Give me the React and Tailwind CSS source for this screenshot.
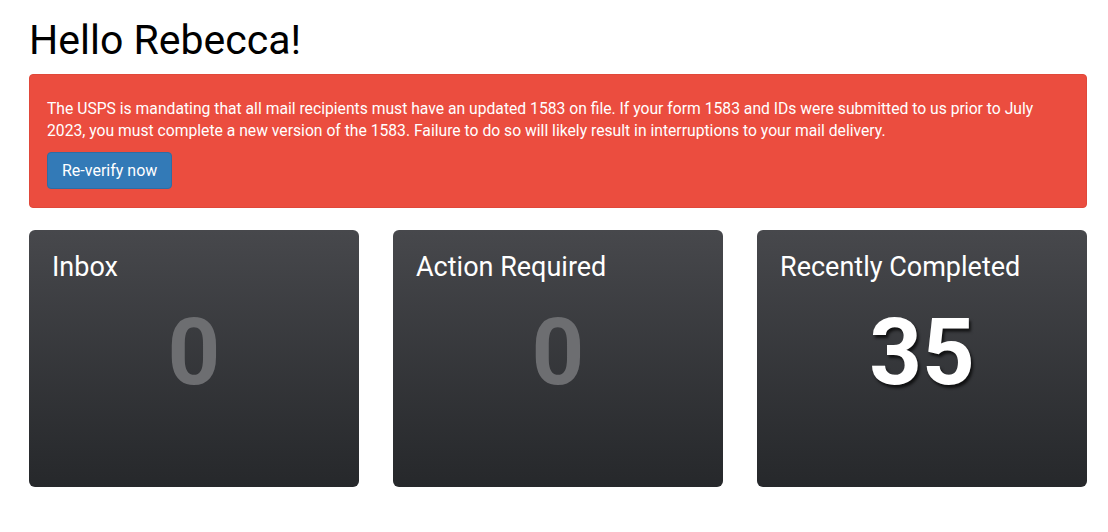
export default function App() {
  const cards = [
    { title: 'Inbox', count: 0 },
    { title: 'Action Required', count: 0 },
    { title: 'Recently Completed', count: 35 },
  ]

  return (
    <div className="min-h-screen bg-white pl-[29px] pr-[21px] pt-[18px] text-black" style={{ fontFamily: 'Roboto, sans-serif' }}>
      <h1 className="text-[41px] leading-[44px] font-normal">Hello Rebecca!</h1>

      {/* Alert */}
      <div className="mt-[12px] rounded-[4px] border border-[#e0483a] bg-[#eb4d3f] px-[17px] pt-[23px] pb-[18px] text-white">
        <p className="text-[15.7px] leading-[22px]">
          The USPS is mandating that all mail recipients must have an updated 1583 on file. If your form 1583 and IDs were submitted to us prior to July 2023, you must complete a new version of the 1583. Failure to do so will likely result in interruptions to your mail delivery.
        </p>
        <button className="mt-[10px] h-[37px] rounded-[4px] border border-[#2e6da4] bg-[#337ab7] px-[14px] text-[16px] text-white">
          Re-verify now
        </button>
      </div>

      {/* Cards */}
      <div className="mt-[22px] grid grid-cols-3 gap-[34px]">
        {cards.map((c) => (
          <div
            key={c.title}
            className="h-[257px] rounded-[6px] bg-gradient-to-b from-[#47484c] to-[#26282b] px-[23px] pt-[21px]"
          >
            <h2 className="text-[27px] leading-[32px] text-white">{c.title}</h2>
            <div
              className={
                c.count > 0
                  ? 'mt-[15px] text-center text-[92px] leading-[110px] font-bold text-white [text-shadow:2px_3px_3px_rgba(0,0,0,0.7)]'
                  : 'mt-[15px] text-center text-[92px] leading-[110px] font-bold text-[#6d6e71]'
              }
            >
              {c.count}
            </div>
          </div>
        ))}
      </div>
    </div>
  )
}
